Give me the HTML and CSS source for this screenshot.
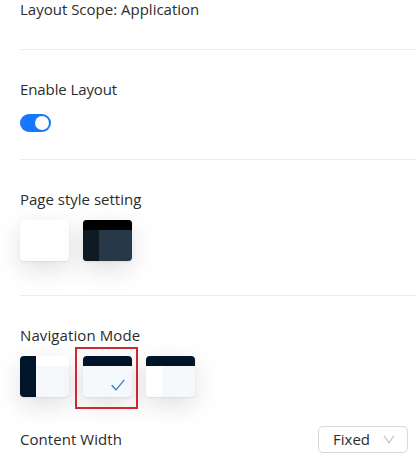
FILE: index.html
```
<!DOCTYPE html>
<html lang="en">
<head>
<meta charset="utf-8">
<title>Layout settings</title>
<link rel="stylesheet" href="styles.css">
</head>
<body>
<main class="panel">
  <section class="section scope">
    <h2 class="title"><span class="t-scope">Layout Scope: Application</span></h2>
  </section>
  <section class="section enable">
    <h2 class="title"><span class="t-enable">Enable Layout</span></h2>
    <button class="switch" role="switch" aria-checked="true"><span class="knob"></span></button>
  </section>
  <section class="section style">
    <h2 class="title"><span class="t-style">Page style setting</span></h2>
    <div class="thumbs">
      <div class="thumb light"></div>
      <div class="thumb dark"><div class="head"></div><div class="side"></div></div>
    </div>
  </section>
  <section class="section nav">
    <h2 class="title"><span class="t-nav">Navigation Mode</span></h2>
    <div class="thumbs">
      <div class="thumb side-mode"><div class="side"></div><div class="head"></div></div>
      <div class="thumb top-mode"><div class="head"></div>
        <svg class="check" viewBox="0 0 14 12"><path d="M.7 6.3 5 10.8 13.3.8"/></svg>
        <div class="highlight"></div>
      </div>
      <div class="thumb mix-mode"><div class="head"></div><div class="side"></div></div>
    </div>
    <div class="row">
      <span class="t-width">Content Width</span>
      <div class="select"><span class="t-fixed">Fixed</span>
        <svg class="arrow" viewBox="0 0 12 9"><path d="M1 .8 6 7.8 11 .8"/></svg>
      </div>
    </div>
  </section>
</main>
</body>
</html>
```
FILE: styles.css
```
* { box-sizing: border-box; }
body {
  margin: 0;
  height: 456px;
  overflow: hidden;
  background: #fff;
  color: #2c2c2c;
  font: 15px/22px "Open Sans", "Noto Sans", sans-serif;
}
.panel { padding-left: 20px; }
.section { border-bottom: 1px solid #ebebeb; }
.scope { height: 50px; }
.enable { height: 110px; padding-top: 28px; }
.style { height: 136px; padding-top: 28px; }
.nav { height: 160px; padding-top: 28px; border: 0; }
.title { margin: 0; height: 22px; font-size: 15px; font-weight: 400; white-space: nowrap; }
.scope .title { line-height: 18px; }
.t-scope { letter-spacing: 0; }
.t-enable { letter-spacing: -.1px; }
.t-style { letter-spacing: 0; }
.t-nav { letter-spacing: .1px; }
.t-width { margin-top: -2px; letter-spacing: .06px; }
.t-fixed { margin-top: -1px; }
.switch {
  display: flex;
  justify-content: flex-end;
  align-items: center;
  width: 31px;
  height: 18px;
  margin-top: 14px;
  padding: 0 2px;
  border: 0;
  border-radius: 9px;
  background: #1677ff;
}
.knob { width: 14px; height: 14px; border-radius: 50%; background: #fff; }
.thumbs { display: flex; gap: 14px; margin-top: 10px; }
.thumb {
  position: relative;
  width: 49px;
  height: 41px;
  border-radius: 4px;
  background: #f6f9fc;
  box-shadow: 0 1px 2px rgba(0, 0, 0, .07), 0 8px 26px rgba(0, 0, 0, .13);
}
.light { background: #fff; }
.dark { background: #273849; }
.head { height: 10px; border-radius: 4px 4px 0 0; background: #001529; }
.dark .head { background: #000; }
.side { width: 16px; height: 31px; border-radius: 0 0 0 4px; }
.dark .side { background: #101a22; }
.mix-mode .side { background: #fff; }
.side-mode { display: flex; }
.side-mode .side { height: 41px; border-radius: 4px 0 0 4px; background: #001529; }
.side-mode .head { flex: 1; border-radius: 0 4px 0 0; background: #fff; }
.check { position: absolute; left: 28px; top: 23px; width: 14px; height: 12px; }
.check path { fill: none; stroke: #3b78cc; stroke-width: 1.3; }
.highlight {
  position: absolute;
  left: -8px;
  top: -9px;
  width: 63px;
  height: 62px;
  border: 2px solid #d02832;
}
.row { display: flex; justify-content: space-between; align-items: center; margin: 29px 8px 0 0; }
.select {
  display: flex;
  justify-content: space-between;
  align-items: center;
  width: 90px;
  height: 27px;
  padding: 0 12px 0 14px;
  border: 1px solid #d9d9d9;
  border-radius: 5px;
  background: #fff;
}
.arrow { width: 12px; height: 9px; }
.arrow path { fill: none; stroke: #bdbdbd; stroke-width: 1.1; }
```
